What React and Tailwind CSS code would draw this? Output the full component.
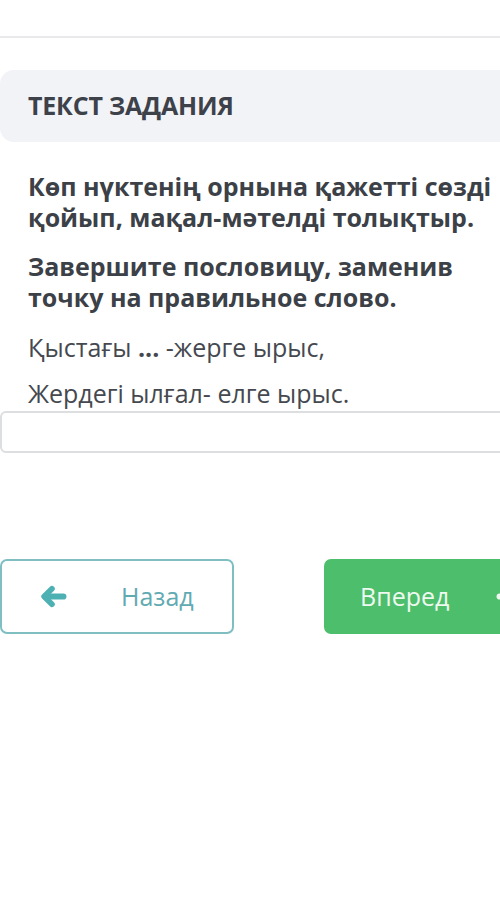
import React from "react";

// Chunky rounded arrows: a thick chevron head joined to a thick shaft
function ArrowLeft({ className }) {
  return (
    <svg viewBox="0 0 26 22" className={className} fill="none" stroke="currentColor" strokeLinecap="round" strokeLinejoin="round">
      <path d="M11.5 3.5 L4 11 L11.5 18.5" strokeWidth="5.5" />
      <path d="M5 11 H22.5" strokeWidth="6" />
    </svg>
  );
}

function ArrowRight({ className }) {
  return (
    <svg viewBox="0 0 26 22" className={className} fill="none" stroke="currentColor" strokeLinecap="round" strokeLinejoin="round">
      <path d="M14.5 3.5 L22 11 L14.5 18.5" strokeWidth="5.5" />
      <path d="M3.5 11 H21" strokeWidth="6" />
    </svg>
  );
}

export default function App() {
  return (
    <div
      className="w-[500px] h-[918px] overflow-hidden bg-white text-[#3c4047]"
      style={{ fontFamily: '"Open Sans", "Noto Sans", sans-serif' }}
    >
      <div className="w-[560px]">
        <div className="h-[38px] border-b-2 border-[#e9e9eb]" />

        <div className="mt-[32px] h-[72px] rounded-l-[14px] bg-[#f2f3f7] flex items-center pl-[28px]">
          <h2 className="text-[25px] font-bold tracking-[-0.2px] text-[#3d4149]">ТЕКСТ ЗАДАНИЯ</h2>
        </div>

        <div className="pl-[28px] pt-[29px] w-[500px]">
          <p className="text-[25px] font-bold leading-[31px] text-[#3c4047]">
            Көп нүктенің орнына қажетті сөзді қойып, мақал-мәтелді толықтыр.
          </p>
          <p className="mt-[18px] text-[25px] font-bold leading-[31px] text-[#3c4047]">
            Завершите пословицу, заменив точку на правильное слово.
          </p>
          <p className="mt-[19px] text-[25px] leading-[31px] text-[#45494f]">
            Қыстағы <span className="font-bold">...</span> -жерге ырыс,
          </p>
          <p className="mt-[15px] text-[25px] leading-[31px] text-[#45494f]">
            Жердегі ылғал- елге ырыс.
          </p>
        </div>

        <div className="mt-[2px] h-[42px] w-[560px] rounded-[6px] border-2 border-[#dcdedf] bg-white" />

        <div className="mt-[106px] flex gap-[90px]">
          <button className="w-[234px] h-[75px] rounded-[7px] border-2 border-[#7fbfc2] bg-white flex items-center pl-[38px] text-[#4db1b3]">
            <ArrowLeft className="w-[27px] h-[23px]" />
            <span className="ml-[54px] text-[25px] text-[#62aab2]">Назад</span>
          </button>
          <button className="w-[234px] h-[75px] rounded-[7px] bg-[#4dbe6b] flex items-center pl-[36px] text-[#eef9f0]">
            <span className="text-[25px]">Вперед</span>
            <ArrowRight className="ml-[47px] w-[27px] h-[23px]" />
          </button>
        </div>
      </div>
    </div>
  );
}
